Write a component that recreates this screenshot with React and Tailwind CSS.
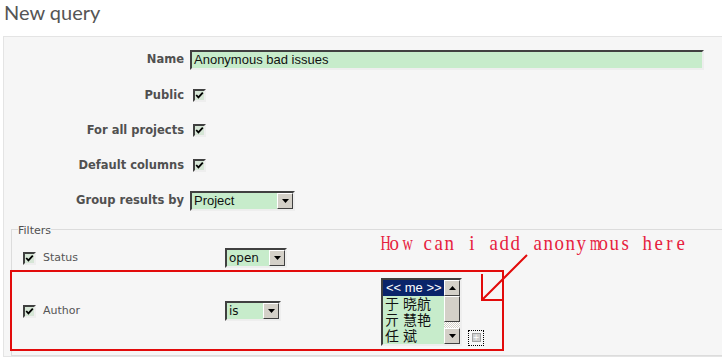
import React from 'react';

const bevelIn = 'border-2 border-t-[#404040] border-l-[#404040] border-b-[#eeeeee] border-r-[#eeeeee]';
const bevelOut = 'border border-t-[#ffffff] border-l-[#ffffff] border-b-[#404040] border-r-[#404040] bg-[#d4d0c8]';

function Check({ className = '' }) {
  return (
    <span className={`inline-flex h-[13px] w-[13px] shrink-0 items-center justify-center ${bevelIn} bg-[#d6e6d6] ${className}`}>
      <svg width="9" height="9" viewBox="0 0 9 9">
        <path d="M1.2 4 L3.4 6.4 L7.8 1.6" stroke="#000" strokeWidth="1.8" fill="none" />
      </svg>
    </span>
  );
}

function Arrow({ up = false }) {
  return (
    <svg width="7" height="4" viewBox="0 0 7 4">
      <path d={up ? 'M0 4h7L3.5 0z' : 'M0 0h7L3.5 4z'} fill="#000" />
    </svg>
  );
}

function Select({ value, className, textClass }) {
  return (
    <div className={`flex h-[20px] ${className} ${bevelIn} bg-[#c7eccb]`}>
      <span className={`flex-1 pl-[2px] leading-[16px] text-[#111] ${textClass}`}>{value}</span>
      <span className={`flex h-[16px] w-[16px] items-center justify-center ${bevelOut}`}>
        <Arrow />
      </span>
    </div>
  );
}

function Row({ label, height = 'h-[35px]', children }) {
  return (
    <div className={`grid ${height} grid-cols-[173px_1fr] items-center gap-x-[6px]`}>
      <span className="text-right text-[11.5px] font-bold text-[#505050]">{label}</span>
      <div className="flex items-center">{children}</div>
    </div>
  );
}

// monospaced serif look: each character gets an 11px cell
function scaleFor(c) {
  if (c === 'm' || c === 'M') return 'scale-x-[0.64]';
  if (c === 'w' || c === 'H') return 'scale-x-[0.68]';
  return 'scale-x-[0.9]';
}

function MonoText({ text }) {
  return (
    <span className="inline-flex">
      {text.split('').map((c, i) => (
        <span key={i} className="inline-block w-[11px] text-center">
          <span className={`inline-block ${scaleFor(c)}`}>{c === ' ' ? '\u00a0' : c}</span>
        </span>
      ))}
    </span>
  );
}

export default function App() {
  const users = ['于 晓航', '亓 慧艳', '任 斌'];

  return (
    <div className="relative h-[358px] w-[722px] overflow-hidden bg-white font-['DejaVu_Sans',Verdana,sans-serif]">
      <h2 className="h-[36px] pl-[4px] font-['Lato',sans-serif] text-[20px] leading-[24px] text-[#555]">New query</h2>

      <div className="ml-[3px] w-[760px] border border-[#e4e4e4] bg-[#f6f6f6] pl-[7px] pt-[4px]">
        <Row label="Name" height="h-[37px]">
          <div className={`h-[20px] w-[514px] ${bevelIn} bg-[#c7eccb] pl-[2px] font-['Liberation_Sans',Arial,sans-serif] text-[13px] leading-[16px] text-[#111]`}>
            Anonymous bad issues
          </div>
        </Row>
        <Row label="Public">
          <Check className="ml-[3px]" />
        </Row>
        <Row label="For all projects">
          <Check className="ml-[3px]" />
        </Row>
        <Row label="Default columns">
          <Check className="ml-[3px]" />
        </Row>
        <Row label="Group results by">
          <Select value="Project" className="w-[105px]" textClass="font-['Liberation_Sans',Arial,sans-serif] text-[13px]" />
        </Row>

        <fieldset className="mt-[3px] border border-[#dcdcdc] pb-[4px] pl-[6px]">
          <legend className="pt-[3px] text-[11px] leading-[13px] text-[#505050]">Filters</legend>
          <div className="ml-[5px] pt-[8px]">
            <div className="grid h-[26px] grid-cols-[202px_156px_1fr] items-center">
              <div className="flex items-center">
                <Check />
                <span className="ml-[7px] text-[11px] text-[#555]">Status</span>
              </div>
              <Select value="open" className="w-[62px]" textClass="text-[12px]" />
              <div />
            </div>
            <div className="grid h-[80px] grid-cols-[202px_156px_1fr] items-center">
              <div className="flex items-center">
                <Check />
                <span className="ml-[7px] text-[11px] text-[#555]">Author</span>
              </div>
              <Select value="is" className="w-[56px]" textClass="text-[12px]" />
              <div className="flex items-end pt-[1px]">
                <div className={`flex h-[68px] w-[81px] ${bevelIn} bg-[#c7eccb]`}>
                  <div className="flex flex-1 flex-col font-['Liberation_Sans','Noto_Sans_CJK_SC',sans-serif]">
                    <div className="h-[16px] bg-[#0a246a] pl-[3px] text-[13px] leading-[16px] text-white">&lt;&lt; me &gt;&gt;</div>
                    {users.map((u) => (
                      <div key={u} className="h-[16px] pl-[2px] text-[14px] leading-[16px] text-[#111]">{u}</div>
                    ))}
                  </div>
                  <div className="flex w-[16px] flex-col">
                    <span className={`flex h-[16px] items-center justify-center ${bevelOut}`}><Arrow up /></span>
                    <span className={`h-[26px] ${bevelOut}`} />
                    <span className="h-[6px] bg-[repeating-conic-gradient(#ffffff_0_25%,#d4d0c8_0_50%)] bg-[length:2px_2px]" />
                    <span className={`flex h-[16px] items-center justify-center ${bevelOut}`}><Arrow /></span>
                  </div>
                </div>
                <span className="ml-[6px] flex h-[16px] w-[16px] items-center justify-center border border-dotted border-black">
                  <span className="flex h-[9px] w-[9px] items-center justify-center border border-[#a0a0a0] bg-[#cfcfcf] text-[8px] leading-none text-white">+</span>
                </span>
              </div>
            </div>
          </div>
        </fieldset>
      </div>

      {/* annotation drawn over the screenshot */}
      <svg className="pointer-events-none absolute left-0 top-0" width="722" height="358">
        <rect x="11" y="271" width="492" height="79" fill="none" stroke="#e20b0b" strokeWidth="2" />
        <path d="M527 255 L482 300 M482 274 L482 300 L503 300" fill="none" stroke="#e20b0b" strokeWidth="2" />
      </svg>
      <span className="pointer-events-none absolute left-[378px] top-[232px] font-['Liberation_Serif',serif] text-[21px] leading-[22px] text-[#e6213e]">
        <MonoText text="How can i add anonymous here" />
      </span>
    </div>
  );
}
